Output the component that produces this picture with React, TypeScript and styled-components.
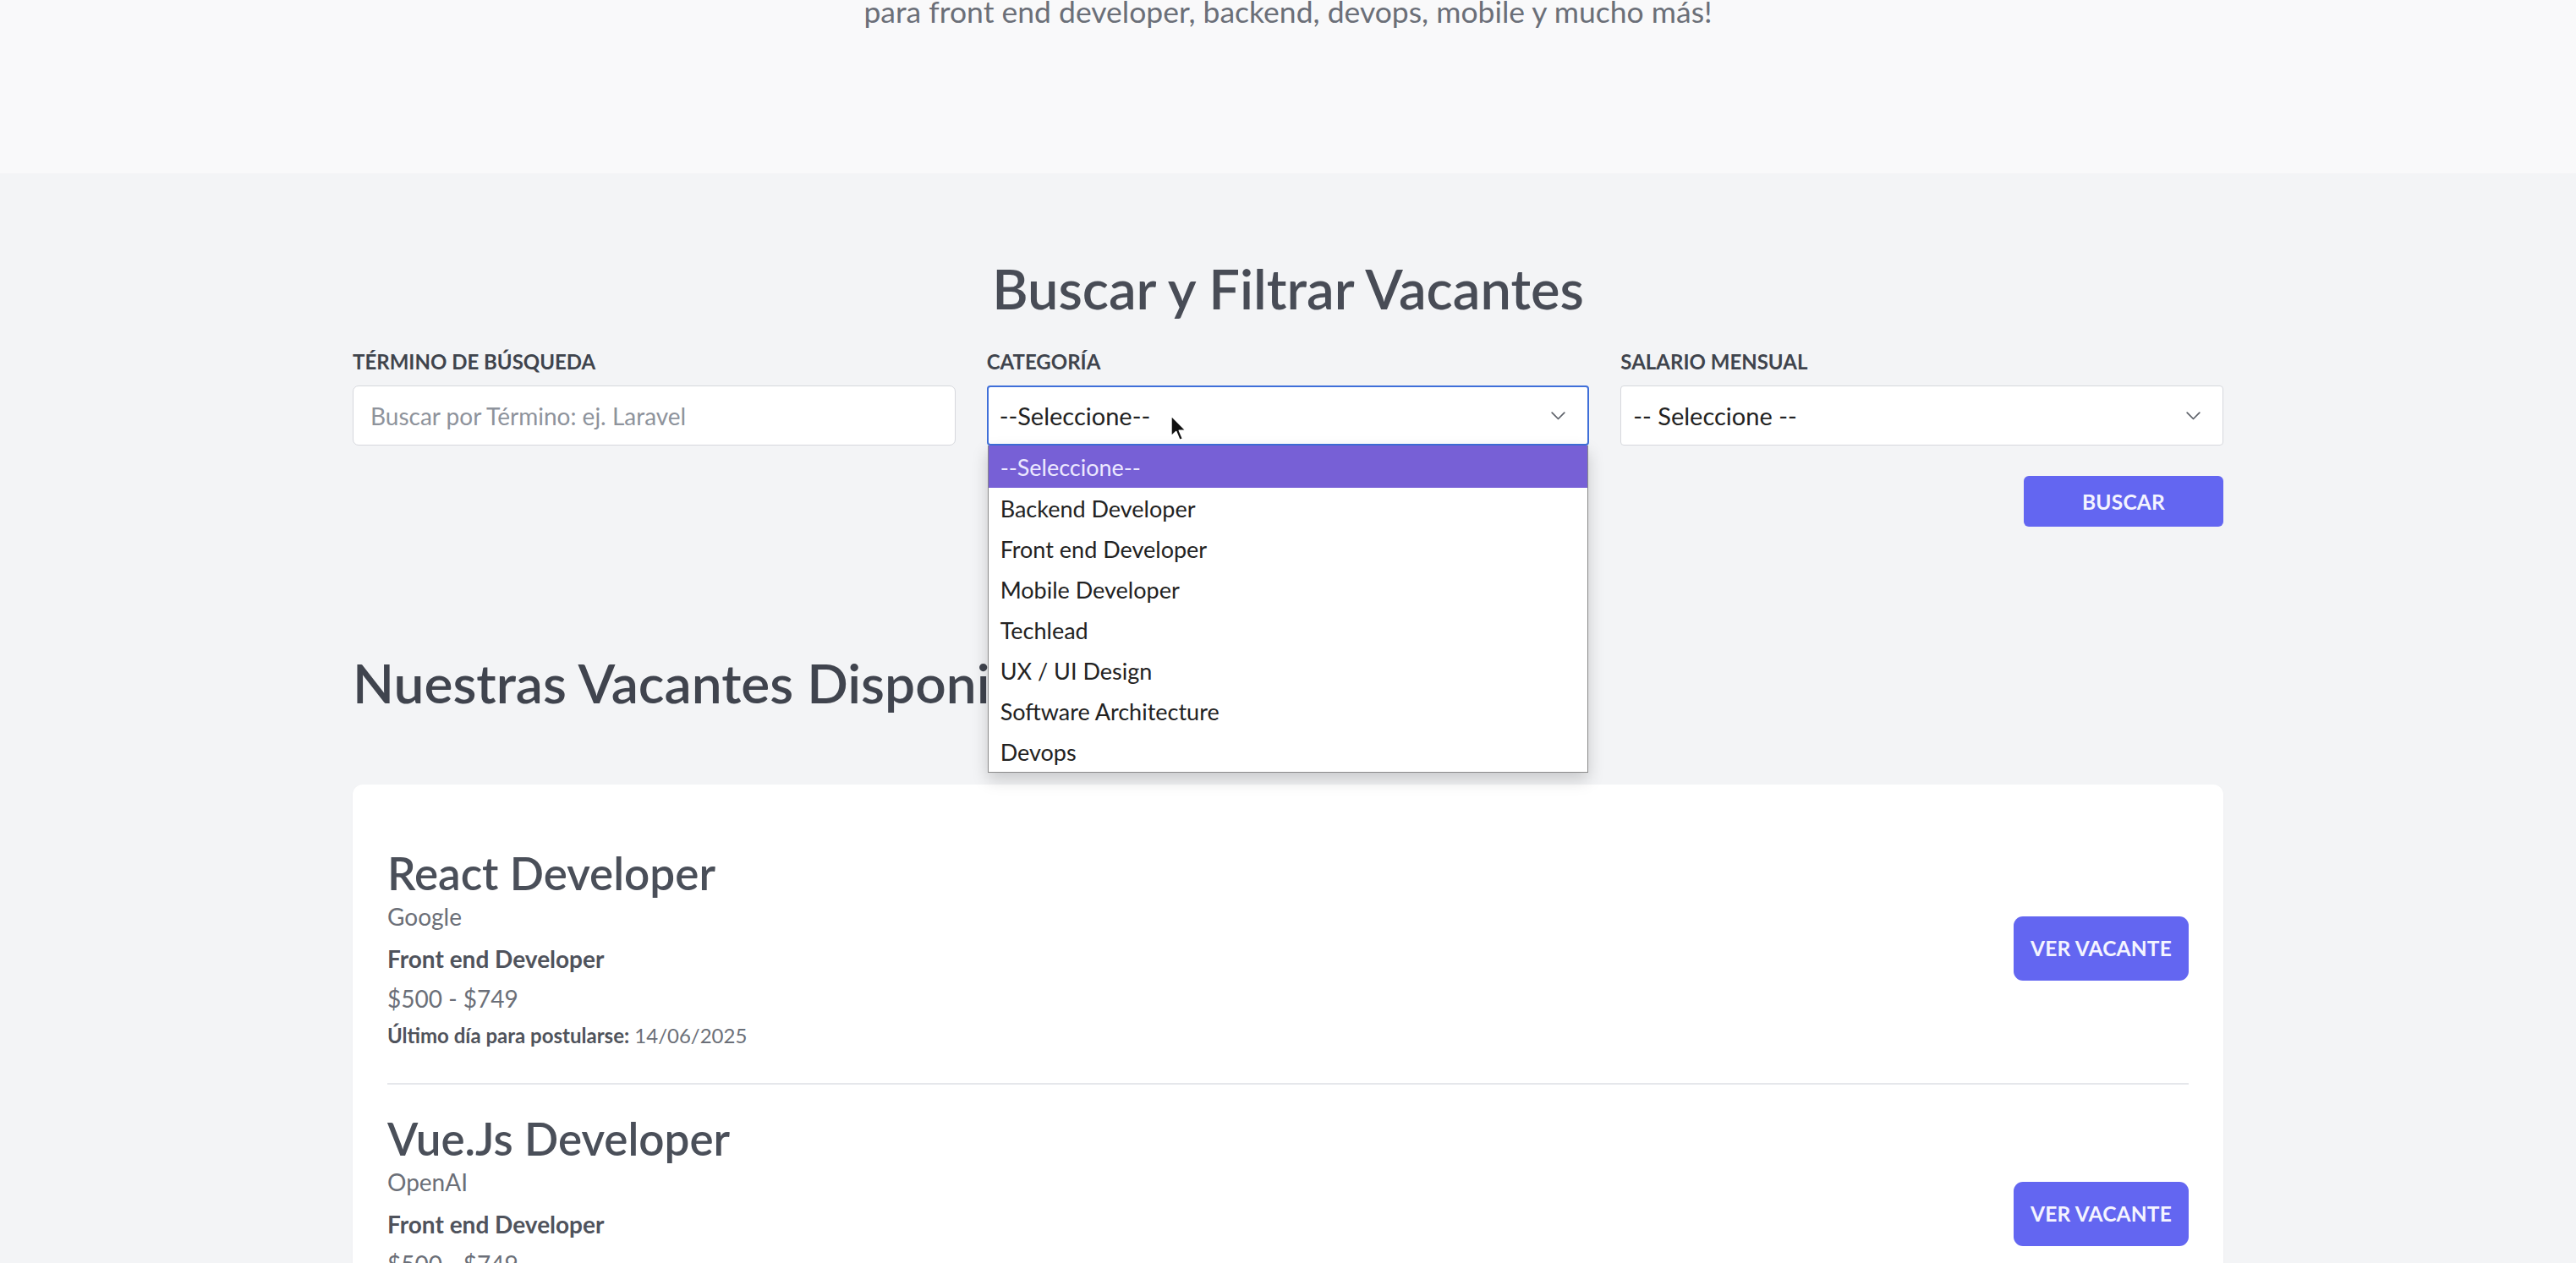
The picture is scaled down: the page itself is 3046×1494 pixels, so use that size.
import React from "react";
import styled, { createGlobalStyle } from "styled-components";

const GlobalStyle = createGlobalStyle`
  html, body { margin: 0; padding: 0; }
  body {
    background: #f3f4f6;
    font-family: Lato, "Noto Sans", "Liberation Sans", sans-serif;
    color: #1f2937;
  }
  * { box-sizing: border-box; }
`;

const Page = styled.div`
  width: 100%;
  min-height: 1494px;
  overflow: hidden;
`;

const Hero = styled.header`
  height: 205px;
  background: #f9f9fa;
  display: flex;
  justify-content: center;
  align-items: flex-start;
  overflow: hidden;
`;

const HeroText = styled.p`
  margin: -6px 0 0;
  font-size: 35.5px;
  line-height: 40px;
  color: #6b6f78;
`;

const Main = styled.main`
  background: #f3f4f6;
  padding-top: 98px;
`;

const Container = styled.div`
  width: 2212px;
  margin: 0 auto;
`;

const SectionTitle = styled.h2`
  margin: 0;
  text-align: center;
  font-size: 65px;
  line-height: 77px;
  font-weight: 600;
  color: #484c56;
`;

const FilterGrid = styled.div`
  display: grid;
  grid-template-columns: repeat(3, 1fr);
  column-gap: 37px;
  margin-top: 33px;
`;

const Field = styled.div`
  display: flex;
  flex-direction: column;
  gap: 13px;
`;

const Label = styled.label`
  font-size: 24px;
  line-height: 30px;
  font-weight: 700;
  text-transform: uppercase;
  color: #3f444d;
`;

const TextInput = styled.input`
  height: 71px;
  width: 100%;
  border: 1.5px solid #d6d8dd;
  border-radius: 7px;
  background: #fff;
  padding: 0 20px;
  font-family: inherit;
  font-size: 28px;
  color: #1f2937;
  outline: none;
  &::placeholder { color: #8e939c; }
`;

const SelectWrap = styled.div`
  position: relative;
`;

const SelectBox = styled.div<{ $focused?: boolean }>`
  height: 71px;
  display: flex;
  align-items: center;
  justify-content: space-between;
  background: #fff;
  border: ${(p) => (p.$focused ? "2.5px solid #3f6fd9" : "1.5px solid #d6d8dd")};
  border-radius: 4px;
  padding: 0 26px 0 ${(p) => (p.$focused ? "13px" : "14px")};
  font-size: 29px;
  color: #222;
`;

const Chevron = () => (
  <svg width="17" height="10" viewBox="0 0 17 10" fill="none">
    <polyline points="1.2,1.2 8.5,8.5 15.8,1.2" stroke="#5d6169" strokeWidth="1.7" strokeLinecap="round" strokeLinejoin="round" />
  </svg>
);

const Dropdown = styled.ul`
  position: absolute;
  top: 100%;
  left: 1px;
  right: 1px;
  margin: 0;
  padding: 0;
  list-style: none;
  background: #fff;
  border: 1.5px solid #8a8a8a;
  border-top: none;
  box-shadow: 0 8px 18px rgba(0, 0, 0, 0.18);
  z-index: 10;
`;

const Option = styled.li<{ $active?: boolean }>`
  height: ${(p) => (p.$active ? "50px" : "48px")};
  display: flex;
  align-items: center;
  padding-left: 14px;
  font-size: 27px;
  color: ${(p) => (p.$active ? "#ece8ff" : "#222")};
  background: ${(p) => (p.$active ? "#7760d6" : "transparent")};
`;

const Cursor = styled.svg`
  position: absolute;
  left: 216px;
  top: 34px;
  z-index: 20;
`;

const Actions = styled.div`
  display: flex;
  justify-content: flex-end;
  margin-top: 36px;
`;

const PrimaryButton = styled.button<{ $w: number; $h: number; $r: number }>`
  width: ${(p) => p.$w}px;
  height: ${(p) => p.$h}px;
  flex-shrink: 0;
  border: none;
  border-radius: ${(p) => p.$r}px;
  background: #6366f1;
  color: #f4f4ff;
  font-family: inherit;
  font-size: 24.5px;
  font-weight: 700;
  text-transform: uppercase;
  letter-spacing: 0.2px;
  cursor: pointer;
`;

const ListTitle = styled.h2`
  margin: 147px 0 0;
  font-size: 64px;
  line-height: 76px;
  font-weight: 600;
  color: #40444e;
`;

const Card = styled.section`
  margin-top: 82px;
  background: #fff;
  border-radius: 12px;
  padding: 41px 41px 0;
  box-shadow: 0 1px 3px rgba(0, 0, 0, 0.04);
`;

const JobRow = styled.article`
  display: flex;
  justify-content: space-between;
  align-items: center;
  padding: 32px 0 39px;
  & + & { border-top: 2px solid #e5e7eb; }
`;

const JobInfo = styled.div`
  display: flex;
  flex-direction: column;
`;

const JobTitle = styled.h3`
  margin: 0;
  font-size: 53px;
  line-height: 64px;
  font-weight: 600;
  color: #4a4f59;
`;

const Company = styled.p`
  margin: 0;
  font-size: 28px;
  line-height: 38px;
  color: #6b6f78;
`;

const Category = styled.p`
  margin: 12px 0 0;
  font-size: 28px;
  line-height: 38px;
  font-weight: 700;
  color: #4f535c;
`;

const Salary = styled.p`
  margin: 9px 0 0;
  font-size: 28px;
  line-height: 38px;
  color: #6b6f78;
`;

const Deadline = styled.p`
  margin: 8px 0 0;
  font-size: 24px;
  line-height: 34px;
  color: #6b6f78;
  & strong { font-weight: 700; color: #4f535c; }
`;

const categories = [
  "--Seleccione--",
  "Backend Developer",
  "Front end Developer",
  "Mobile Developer",
  "Techlead",
  "UX / UI Design",
  "Software Architecture",
  "Devops",
];

const jobs = [
  { title: "React Developer", company: "Google", category: "Front end Developer", salary: "$500 - $749", date: "14/06/2025" },
  { title: "Vue.Js Developer", company: "OpenAI", category: "Front end Developer", salary: "$500 - $749", date: "14/06/2025" },
];

export default function App() {
  return (
    <Page>
      <GlobalStyle />
      <Hero>
        <HeroText>para front end developer, backend, devops, mobile y mucho más!</HeroText>
      </Hero>
      <Main>
        <Container>
          <SectionTitle>Buscar y Filtrar Vacantes</SectionTitle>
          <FilterGrid>
            <Field>
              <Label>Término de Búsqueda</Label>
              <TextInput placeholder="Buscar por Término: ej. Laravel" />
            </Field>
            <Field>
              <Label>Categoría</Label>
              <SelectWrap>
                <SelectBox $focused>
                  <span>--Seleccione--</span>
                  <Chevron />
                </SelectBox>
                <Dropdown>
                  {categories.map((c, i) => (
                    <Option key={c} $active={i === 0}>{c}</Option>
                  ))}
                </Dropdown>
                <Cursor width="23" height="34" viewBox="0 0 20 30">
                  <path d="M1.5 1.5 L1.5 23 L6.6 18.2 L10.3 27 L13.6 25.6 L9.9 17 L16.8 17 Z" fill="#111" stroke="#fff" strokeWidth="1.5" strokeLinejoin="round" />
                </Cursor>
              </SelectWrap>
            </Field>
            <Field>
              <Label>Salario Mensual</Label>
              <SelectBox>
                <span>-- Seleccione --</span>
                <Chevron />
              </SelectBox>
            </Field>
          </FilterGrid>
          <Actions>
            <PrimaryButton $w={236} $h={60} $r={6}>Buscar</PrimaryButton>
          </Actions>
          <ListTitle>Nuestras Vacantes Disponibles</ListTitle>
          <Card>
            {jobs.map((j) => (
              <JobRow key={j.title}>
                <JobInfo>
                  <JobTitle>{j.title}</JobTitle>
                  <Company>{j.company}</Company>
                  <Category>{j.category}</Category>
                  <Salary>{j.salary}</Salary>
                  <Deadline>
                    <strong>Último día para postularse:</strong> {j.date}
                  </Deadline>
                </JobInfo>
                <PrimaryButton $w={207} $h={76} $r={11}>Ver Vacante</PrimaryButton>
              </JobRow>
            ))}
          </Card>
        </Container>
      </Main>
    </Page>
  );
}
